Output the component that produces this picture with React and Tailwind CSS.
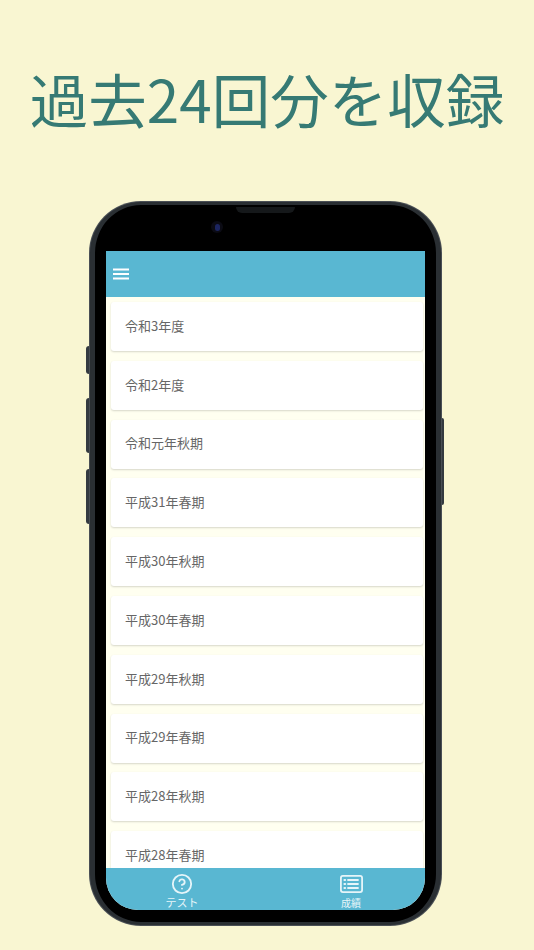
import React from 'react';
import { CircleHelp } from 'lucide-react';

const items = [
    '令和3年度',
    '令和2年度',
    '令和元年秋期',
    '平成31年春期',
    '平成30年秋期',
    '平成30年春期',
    '平成29年秋期',
    '平成29年春期',
    '平成28年秋期',
    '平成28年春期',
];

const font = { fontFamily: '"Noto Sans CJK JP", "Noto Sans", sans-serif' };

const ListIcon = () => (
    <svg width="23" height="18" viewBox="0 0 23 18" fill="none" stroke="currentColor" strokeWidth="1.8" strokeLinecap="round">
        <rect x="0.9" y="0.9" width="21.2" height="16.2" rx="2" />
        <path d="M8 5h10M8 9h10M8 13h10" strokeWidth="1.8" />
        <path d="M4.5 5h.6M4.5 9h.6M4.5 13h.6" strokeWidth="2.2" />
    </svg>
);

const App = () => {
    return (
        <div className="w-[534px] h-[950px] bg-[#f9f6d2] overflow-hidden flex flex-col" style={font}>
            <div className="h-[202px] flex items-center justify-center pb-[6px]">
                <h1 className="text-[58.5px] leading-none font-normal text-[#367a74] whitespace-nowrap">過去24回分を収録</h1>
            </div>

            <div className="relative ml-[90px] w-[351px] h-[723px] rounded-[51px] bg-black border-y-[3px] border-x-[5px] border-[#2a2f33] ring-1 ring-[#4a4f55] pt-[46px] px-[11px] pb-[12px]">
                {/* side buttons */}
                <div className="absolute -left-[9px] top-[141px] w-[3px] h-[28px] bg-[#343a40] rounded-l-sm"></div>
                <div className="absolute -left-[9px] top-[193px] w-[3px] h-[55px] bg-[#343a40] rounded-l-sm"></div>
                <div className="absolute -left-[9px] top-[264px] w-[3px] h-[55px] bg-[#343a40] rounded-l-sm"></div>
                <div className="absolute -right-[8px] top-[213px] w-[2px] h-[87px] bg-[#343a40] rounded-r-sm"></div>
                {/* speaker and camera */}
                <div className="absolute left-[141px] top-[2px] w-[59px] h-[6px] bg-[#15181a] rounded-b-md"></div>
                <div className="absolute left-[116px] top-[16px] w-[12px] h-[12px] rounded-full bg-[#0b0b14] flex items-center justify-center">
                    <div className="w-[5px] h-[7px] rounded-full bg-[#1c2560]"></div>
                </div>

                <div className="w-[319px] h-[659px] flex flex-col overflow-hidden rounded-b-[32px] bg-[#fffff0]">
                    <div className="h-[46px] shrink-0 bg-[#59b7d2] flex items-center pl-[7px]">
                        <svg width="16" height="12" viewBox="0 0 16 12" stroke="white" strokeWidth="1.8">
                            <path d="M0 1.5h16M0 6h16M0 10.5h16" />
                        </svg>
                    </div>

                    <div className="flex-1 min-h-0 overflow-hidden flex flex-col gap-[9.8px] pt-[5px] pl-[5px] pr-[2px]">
                        {items.map((item) => (
                            <div key={item} className="h-[49px] shrink-0 bg-white rounded-[3px] shadow-[0_1px_2px_rgba(0,0,0,0.16)] flex items-center pl-[14px] pb-[2px] text-[13px] text-[#666666]">
                                {item}
                            </div>
                        ))}
                    </div>

                    <div className="h-[42px] shrink-0 bg-[#59b7d2] text-[#e6f5f9] flex justify-between pl-[26px] pr-[24px]">
                        <div className="w-[100px] flex flex-col items-center pt-[5px]">
                            <CircleHelp size={22} strokeWidth={2} />
                            <span className="text-[11px] leading-[13px] mt-[1px]">テスト</span>
                        </div>
                        <div className="w-[100px] flex flex-col items-center pt-[7px]">
                            <ListIcon />
                            <span className="text-[10px] leading-[13px] mt-[3px]">成績</span>
                        </div>
                    </div>
                </div>
            </div>
        </div>
    );
};

export default App;
